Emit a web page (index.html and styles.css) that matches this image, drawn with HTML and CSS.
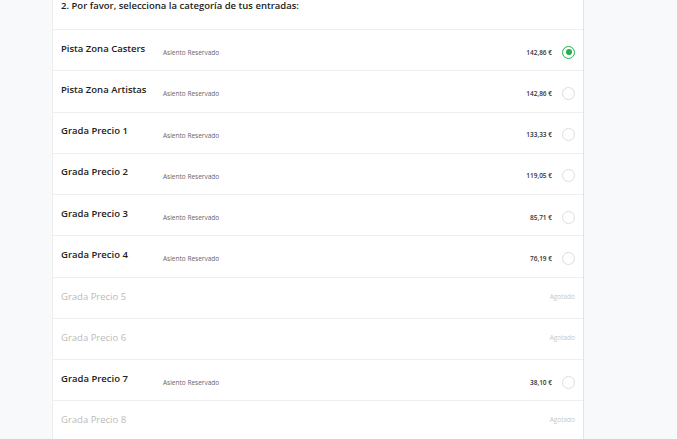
FILE: index.html
```html
<!DOCTYPE html>
<html lang="es">
<head>
    <meta charset="UTF-8">
    <meta name="viewport" content="width=device-width, initial-scale=1.0">
    <title>Selecciona tus entradas</title>
    <link rel="stylesheet" href="styles.css">
</head>
<body>
    <div class="card">
        <h2 class="step-title">2. Por favor, selecciona la categoría de tus entradas:</h2>
        <ul class="categories">
            <li class="category">
                <span class="name">Pista Zona Casters</span>
                <span class="seat">Asiento Reservado</span>
                <span class="price">142,86 €</span>
                <span class="radio checked"></span>
            </li>
            <li class="category">
                <span class="name">Pista Zona Artistas</span>
                <span class="seat">Asiento Reservado</span>
                <span class="price">142,86 €</span>
                <span class="radio"></span>
            </li>
            <li class="category">
                <span class="name">Grada Precio 1</span>
                <span class="seat">Asiento Reservado</span>
                <span class="price">133,33 €</span>
                <span class="radio"></span>
            </li>
            <li class="category">
                <span class="name">Grada Precio 2</span>
                <span class="seat">Asiento Reservado</span>
                <span class="price">119,05 €</span>
                <span class="radio"></span>
            </li>
            <li class="category">
                <span class="name">Grada Precio 3</span>
                <span class="seat">Asiento Reservado</span>
                <span class="price">85,71 €</span>
                <span class="radio"></span>
            </li>
            <li class="category">
                <span class="name">Grada Precio 4</span>
                <span class="seat">Asiento Reservado</span>
                <span class="price">76,19 €</span>
                <span class="radio"></span>
            </li>
            <li class="category sold-out">
                <span class="name">Grada Precio 5</span>
                <span class="status">Agotado</span>
            </li>
            <li class="category sold-out">
                <span class="name">Grada Precio 6</span>
                <span class="status">Agotado</span>
            </li>
            <li class="category">
                <span class="name">Grada Precio 7</span>
                <span class="seat">Asiento Reservado</span>
                <span class="price">38,10 €</span>
                <span class="radio"></span>
            </li>
            <li class="category sold-out">
                <span class="name">Grada Precio 8</span>
                <span class="status">Agotado</span>
            </li>
        </ul>
    </div>
</body>
</html>
```

FILE: styles.css
```css
body {
    margin: 0;
    padding: 0;
    background-color: #f8f9fb;
    font-family: "Open Sans", "Noto Sans", Arial, sans-serif;
    color: #222;
}
.card {
    width: 530px;
    margin-left: 52px;
    background-color: #fff;
    border-left: 1px solid #ececec;
    border-right: 1px solid #e4e4e4;
    min-height: 439px;
}
.step-title {
    margin: 0;
    padding: 0 0 0 8px;
    height: 30px;
    box-sizing: border-box;
    font-size: 9.5px;
    font-weight: 600;
    line-height: 11px;
    color: #222;
    border-bottom: 1px solid #efefef;
}
.categories {
    list-style: none;
    margin: 0;
    padding: 0;
}
.category {
    display: flex;
    align-items: center;
    height: 40.25px;
    padding: 0 8px;
    border-bottom: 1px solid #efefef;
}
.name {
    width: 102px;
    font-size: 9.5px;
    font-weight: 600;
    margin-top: -4px;
    white-space: nowrap;
}
.seat {
    flex: 1;
    font-size: 6.5px;
    color: #666;
    margin-top: 5px;
}
.price {
    font-size: 6.5px;
    font-weight: 600;
    color: #333;
    margin-top: 4px;
}
.radio {
    width: 11px;
    height: 11px;
    border: 1px solid #ddd;
    border-radius: 50%;
    margin-left: 10px;
    margin-top: 4px;
    display: flex;
    justify-content: center;
    align-items: center;
}
.radio.checked {
    border-color: #22b14c;
}
.radio.checked::after {
    content: "";
    width: 6px;
    height: 6px;
    border-radius: 50%;
    background-color: #22b14c;
}
.sold-out .name {
    flex: 1;
    font-weight: 400;
    color: #bbb;
    margin-top: -3px;
}
.sold-out .status {
    font-size: 6.5px;
    color: #c8c8c8;
    margin-top: -3px;
}
```
